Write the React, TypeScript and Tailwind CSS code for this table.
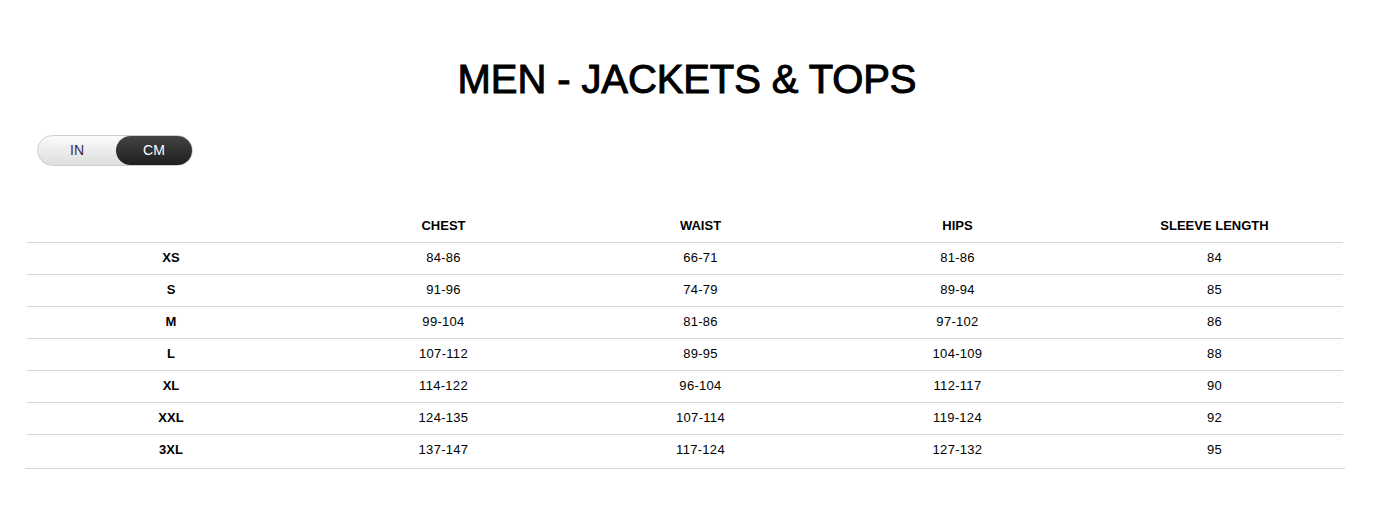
import { useState } from "react";

const rows = [
  { size: "XS", chest: "84-86", waist: "66-71", hips: "81-86", sleeve: "84" },
  { size: "S", chest: "91-96", waist: "74-79", hips: "89-94", sleeve: "85" },
  { size: "M", chest: "99-104", waist: "81-86", hips: "97-102", sleeve: "86" },
  { size: "L", chest: "107-112", waist: "89-95", hips: "104-109", sleeve: "88" },
  { size: "XL", chest: "114-122", waist: "96-104", hips: "112-117", sleeve: "90" },
  { size: "XXL", chest: "124-135", waist: "107-114", hips: "119-124", sleeve: "92" },
  { size: "3XL", chest: "137-147", waist: "117-124", hips: "127-132", sleeve: "95" },
];

const UnitToggle = () => {
  const [unit, setUnit] = useState("cm");
  return (
    <div className="flex h-[31px] w-[156px] rounded-full border border-[#cfcfcf] bg-gradient-to-b from-[#fbfbfb] to-[#dedede] text-[14px]">
      <button
        onClick={() => setUnit("in")}
        className={
          unit === "in"
            ? "flex w-[78px] items-center justify-center rounded-full bg-gradient-to-b from-[#4a4a4a] to-[#222] text-white"
            : "flex w-[78px] items-center justify-center rounded-full text-[#3a2a4a]"
        }
      >
        IN
      </button>
      <button
        onClick={() => setUnit("cm")}
        className={
          unit === "cm"
            ? "flex flex-1 items-center justify-center rounded-full bg-gradient-to-b from-[#444] to-[#1f1f1f] text-white"
            : "flex flex-1 items-center justify-center rounded-full text-[#3a2a4a]"
        }
      >
        CM
      </button>
    </div>
  );
};

export default function App() {
  return (
    <div className="min-h-[532px] w-[1374px] bg-white font-['Liberation_Sans',Arial,sans-serif] text-black">
      <h1 className="pt-[57px] text-center text-[40px] leading-[44px] tracking-[-0.1px] [-webkit-text-stroke:1px_black]">
        MEN - JACKETS &amp; TOPS
      </h1>

      <div className="mt-[34px] pl-[37px]">
        <UnitToggle />
      </div>

      {/* size table */}
      <div className="ml-[25px] mt-[44px] w-[1320px] border-b border-[#d6d6d6]">
        <table className="mx-[2px] w-[1316px] table-fixed border-collapse text-[13px]">
          <colgroup>
            <col className="w-[288px]" />
            <col className="w-[257px]" />
            <col className="w-[257px]" />
            <col className="w-[257px]" />
            <col className="w-[257px]" />
          </colgroup>
          <thead>
            <tr className="h-[32px] border-b border-[#d6d6d6]">
              <th></th>
              <th className="pb-[1px] font-bold">CHEST</th>
              <th className="pb-[1px] font-bold">WAIST</th>
              <th className="pb-[1px] font-bold">HIPS</th>
              <th className="pb-[1px] font-bold">SLEEVE LENGTH</th>
            </tr>
          </thead>
          <tbody>
            {rows.map((r, i) => (
              <tr
                key={r.size}
                className={i === rows.length - 1 ? "h-[34px] text-center" : "h-[32px] border-b border-[#d6d6d6] text-center"}
              >
                <td className={i === rows.length - 1 ? "pb-[3px] font-bold" : "pb-[1px] font-bold"}>{r.size}</td>
                <td className={i === rows.length - 1 ? "pb-[3px] tracking-[0.3px]" : "pb-[1px] tracking-[0.3px]"}>{r.chest}</td>
                <td className={i === rows.length - 1 ? "pb-[3px] tracking-[0.3px]" : "pb-[1px] tracking-[0.3px]"}>{r.waist}</td>
                <td className={i === rows.length - 1 ? "pb-[3px] tracking-[0.3px]" : "pb-[1px] tracking-[0.3px]"}>{r.hips}</td>
                <td className={i === rows.length - 1 ? "pb-[3px] tracking-[0.3px]" : "pb-[1px] tracking-[0.3px]"}>{r.sleeve}</td>
              </tr>
            ))}
          </tbody>
        </table>
      </div>
    </div>
  );
}
